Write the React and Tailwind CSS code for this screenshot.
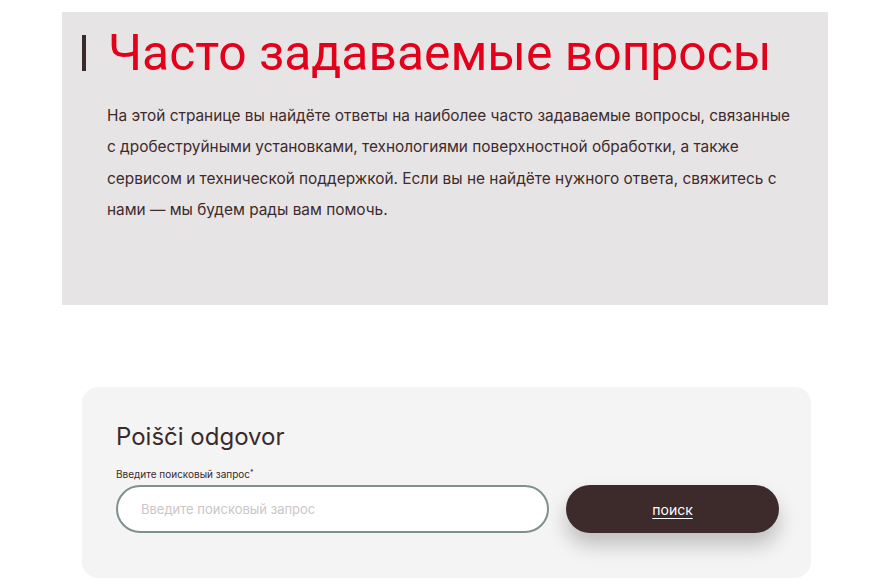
import React, { useState } from 'react';

const App = () => {
  const [query, setQuery] = useState('');

  return (
    <div className="min-h-screen bg-white pt-[12px] pb-8" style={{ fontFamily: 'Inter, "Noto Sans", sans-serif' }}>
      {/* intro */}
      <section className="ml-[62px] w-[766px] h-[293px] bg-[#e7e4e5] pl-[20px] pt-[11px]">
        <div className="flex items-center">
          <span className="w-[4px] h-[36px] bg-[#3a2a2b] mr-[22px]"></span>
          <h1 className="text-[#e2001a] text-[49.8px] leading-[60px] font-normal" style={{ fontFamily: 'Roboto, "Liberation Sans", sans-serif' }}>
            Часто задаваемые вопросы
          </h1>
        </div>
        <p className="mt-[17px] ml-[25px] w-[694px] text-[15.4px] leading-[31.3px] text-[#3d2b2c]">
          На этой странице вы найдёте ответы на наиболее часто задаваемые вопросы, связанные с дробеструйными установками, технологиями поверхностной обработки, а также сервисом и технической поддержкой. Если вы не найдёте нужного ответа, свяжитесь с нами — мы будем рады вам помочь.
        </p>
      </section>

      {/* search card */}
      <section className="ml-[82px] mt-[82px] w-[729px] h-[191px] bg-[#f4f4f4] rounded-[16px] pl-[34px] pr-[32px] pt-[34px]">
        <h2 className="text-[24px] leading-[32px] text-[#3a2a2b]">Poišči odgovor</h2>
        <label className="block mt-[14px] text-[10px] leading-[14px] text-[#3a2a2b]">
          Введите поисковый запрос<sup className="text-[7px]">*</sup>
        </label>
        <div className="flex items-center gap-[17px] mt-[4px]">
          <input
            type="text"
            value={query}
            onChange={(e) => setQuery(e.target.value)}
            placeholder="Введите поисковый запрос"
            className="w-[433px] h-[48px] rounded-full border-2 border-[#7e9090] bg-white px-[23px] text-[13px] text-[#3a2a2b] placeholder:text-[#cbc6c7] outline-none"
          />
          <button className="w-[213px] h-[48px] rounded-full bg-[#3d2a2b] text-white text-[14px] underline underline-offset-[3px] shadow-[0_12px_20px_rgba(0,0,0,0.22)]">
            поиск
          </button>
        </div>
      </section>
    </div>
  );
};

export default App;
